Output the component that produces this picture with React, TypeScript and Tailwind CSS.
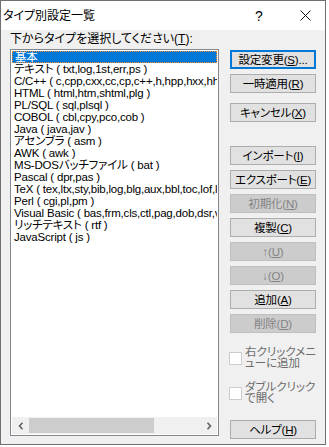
import React from 'react';

const items = [
  '基本',
  'テキスト ( txt,log,1st,err,ps )',
  'C/C++ ( c,cpp,cxx,cc,cp,c++,h,hpp,hxx,hh,inl,rc )',
  'HTML ( html,htm,shtml,plg )',
  'PL/SQL ( sql,plsql )',
  'COBOL ( cbl,cpy,pco,cob )',
  'Java ( java,jav )',
  'アセンブラ ( asm )',
  'AWK ( awk )',
  'MS-DOSバッチファイル ( bat )',
  'Pascal ( dpr,pas )',
  'TeX ( tex,ltx,sty,bib,log,blg,aux,bbl,toc,lof,lot,idx,ind,glo )',
  'Perl ( cgi,pl,pm )',
  'Visual Basic ( bas,frm,cls,ctl,pag,dob,dsr,vb )',
  'リッチテキスト ( rtf )',
  'JavaScript ( js )',
];

// ボタン: label + mnemonic
const Btn: React.FC<{
  label: string;
  mn: string;
  tail?: string;
  disabled?: boolean;
  isDefault?: boolean;
  className?: string;
}> = ({ label, mn, tail, disabled, isDefault, className }) => {
  let cls = 'border border-[#adadad] bg-[#e1e1e1] text-black';
  if (isDefault) cls = 'border-2 border-[#0078d7] bg-[#e1e1e1] text-black';
  if (disabled) cls = 'border border-[#bfbfbf] bg-[#cccccc] text-[#838383]';
  return (
    <div
      className={`h-[19px] w-[86px] flex items-center justify-center text-[11.5px] leading-[14px] tracking-[-0.2px] whitespace-nowrap ${cls} ${className || ''}`}
    >
      {label}(<span className="underline underline-offset-[1px]">{mn}</span>){tail}
    </div>
  );
};

const Check: React.FC<{ lines: string[]; className?: string }> = ({ lines, className }) => (
  <div className={`flex items-center gap-[3px] ${className || ''}`}>
    <div className="w-[13px] h-[13px] border border-[#cccccc] bg-white shrink-0 -ml-[1px]" />
    <div className="text-[11.5px] leading-[11px] text-[#6d6d6d] whitespace-nowrap">
      {lines.map((l) => (
        <div key={l} className="h-[11px]">{l}</div>
      ))}
    </div>
  </div>
);

export default function App() {
  return (
    <div className="w-[329px] h-[447px] bg-white font-['Liberation_Sans','Noto_Sans_CJK_JP',sans-serif] [font-feature-settings:'palt'] select-none">
      <div className="w-[326px] h-[445px] border border-[#707070] flex flex-col">
        {/* タイトルバー */}
        <div className="h-[29px] bg-white flex items-center shrink-0">
          <div className="flex-1 pl-[2px] text-[12px] text-black">タイプ別設定一覧</div>
          <div className="w-[52px] text-center text-[14px] leading-[14px] text-black">?</div>
          <div className="w-[40px] flex items-center justify-center">
            <svg width="11" height="11" viewBox="0 0 11 11">
              <path d="M0.5 0.5 L10.5 10.5 M10.5 0.5 L0.5 10.5" stroke="#111" strokeWidth="1" fill="none" />
            </svg>
          </div>
        </div>

        <div className="flex-1 bg-[#f0f0f0] flex pl-[9px] gap-[11px]">
          {/* 左側 */}
          <div className="w-[209px] flex flex-col">
            <div className="h-[19px] pt-[1px] text-[12px] leading-[16px] text-black whitespace-nowrap">
              下からタイプを選択してください(<span className="underline">T</span>):
            </div>
            <div className="h-[387px] border border-[#828790] bg-white flex flex-col p-[1px]">
              <div className="flex-1 overflow-hidden">
                {items.map((it, i) => (
                  <div
                    key={it}
                    className={`h-[12px] text-[11.5px] leading-[10px] tracking-[-0.2px] whitespace-nowrap overflow-hidden pl-[2px] ${
                      i === 0
                        ? 'bg-[#0078d7] text-white border border-dotted border-[#ff8728] pl-[1px]'
                        : 'text-black pt-[1px]'
                    }`}
                  >
                    {it}
                  </div>
                ))}
              </div>
              {/* 横スクロールバー */}
              <div className="h-[17px] bg-[#f0f0f0] flex items-center">
                <div className="w-[17px] h-[17px] flex items-center justify-center">
                  <svg width="6" height="8" viewBox="0 0 6 8">
                    <path d="M4.5 0.8 L1.5 4 L4.5 7.2" stroke="#606060" strokeWidth="1.6" fill="none" />
                  </svg>
                </div>
                <div className="flex-1 h-[17px] flex">
                  <div className="w-[125px] h-[15px] mt-[1px] bg-[#cdcdcd]" />
                </div>
                <div className="w-[17px] h-[17px] flex items-center justify-center">
                  <svg width="6" height="8" viewBox="0 0 6 8">
                    <path d="M1.5 0.8 L4.5 4 L1.5 7.2" stroke="#606060" strokeWidth="1.6" fill="none" />
                  </svg>
                </div>
              </div>
            </div>
          </div>

          {/* 右側ボタン */}
          <div className="w-[86px] flex flex-col pt-[20px]">
            <Btn label="設定変更" mn="S" tail="..." isDefault />
            <Btn label="一時適用" mn="R" className="mt-[5px]" />
            <Btn label="キャンセル" mn="X" className="mt-[10px]" />
            <Btn label="インポート" mn="I" className="mt-[24px]" />
            <Btn label="エクスポート" mn="E" className="mt-[5px]" />
            <Btn label="初期化" mn="N" disabled className="mt-[5px]" />
            <Btn label="複製" mn="C" className="mt-[5px]" />
            <Btn label="↑" mn="U" disabled className="mt-[5px]" />
            <Btn label="↓" mn="O" disabled className="mt-[5px]" />
            <Btn label="追加" mn="A" className="mt-[5px]" />
            <Btn label="削除" mn="D" disabled className="mt-[5px]" />
            <Check lines={['右クリックメニ', 'ューに追加']} className="mt-[14px]" />
            <Check lines={['ダブルクリック', 'で開く']} className="mt-[13px]" />
            <Btn label="ヘルプ" mn="H" className="mt-[16px]" />
          </div>
        </div>
      </div>
    </div>
  );
}
